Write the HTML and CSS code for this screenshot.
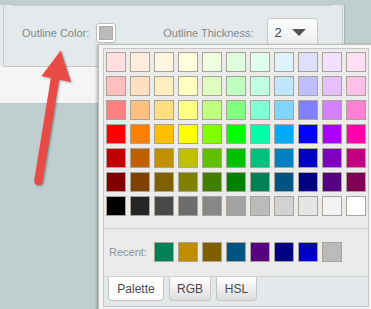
FILE: index.html
```html
<!DOCTYPE html>
<html>
	<head>
		<title>Outline Color Picker</title>
		<link rel="stylesheet" href="styles.css">
	</head>
	<body>
		<div class="window">
			<div class="panel">
				<div class="rule"></div>
				<div class="row">
					<span class="label">Outline Color:</span>
					<span class="color-btn"><span class="color-chip"></span></span>
					<span class="label thick-label">Outline Thickness:</span>
					<span class="select">2<span class="caret"></span></span>
				</div>
			</div>
		</div>

		<svg class="arrow" width="100" height="200" viewBox="0 0 100 200">
			<g class="arrow-shape">
				<line x1="38.5" y1="181" x2="55.5" y2="76" stroke="#e84b46" stroke-width="8.5" stroke-linecap="round"/>
				<polygon points="60.7,50.5 41.5,76 71,82" fill="#e84b46"/>
			</g>
		</svg>

		<div class="picker">
			<div class="picker-body">
				<div class="grid" id="grid"></div>
				<div class="recent">
					<span class="recent-label">Recent:</span>
					<div class="recent-list" id="recent"></div>
				</div>
				<div class="tabs">
					<span class="tab tab-palette active">Palette</span>
					<span class="tab tab-rgb">RGB</span>
					<span class="tab tab-hsl">HSL</span>
				</div>
			</div>
		</div>

		<script>
			let palette = [
				"#ffdfdf", "#ffeedf", "#fff6df", "#ffffdf", "#efffdf", "#dfffdf", "#dffff0", "#dff3ff", "#dfdfff", "#f3dfff", "#ffdff3",
				"#ffbfbf", "#ffdfbf", "#ffefbf", "#ffffbf", "#dfffbf", "#bfffbf", "#bfffe6", "#bfe6ff", "#bfbfff", "#e6bfff", "#ffbfe6",
				"#ff8080", "#ffbf80", "#ffdf80", "#ffff80", "#bfff80", "#80ff80", "#80ffd5", "#80d5ff", "#8080ff", "#d580ff", "#ff80d5",
				"#ff0000", "#ff8000", "#ffbf00", "#ffff00", "#80ff00", "#00ff00", "#00ffaa", "#00aaff", "#0000ff", "#aa00ff", "#ff00aa",
				"#c00000", "#c06000", "#c09000", "#c0c000", "#60c000", "#00c000", "#00c080", "#0080c0", "#0000c0", "#8000c0", "#c00080",
				"#800000", "#804000", "#806000", "#808000", "#408000", "#008000", "#008055", "#005580", "#000080", "#550080", "#800055",
				"#000000", "#252525", "#494949", "#6d6d6d", "#888888", "#a4a4a4", "#bbbbbb", "#d2d2d2", "#e5e5e5", "#f2f2f2", "#ffffff"
			];
			let recent = ["#008055", "#c08c00", "#7f5f00", "#005580", "#55007f", "#000080", "#0000c0", "#bbbbbb"];

			function fill(id, colors) {
				let box = document.getElementById(id);
				for (let c of colors) {
					let s = document.createElement("span");
					s.className = "swatch";
					s.style.background = c;
					box.appendChild(s);
				}
			}

			fill("grid", palette);
			fill("recent", recent);
		</script>
	</body>
</html>
```

FILE: styles.css
```css
body {
	margin: 0;
	width: 371px;
	height: 309px;
	overflow: hidden;
	position: relative;
	background: #bfcece;
	font-family: "Liberation Sans", Arial, sans-serif;
}

.window {
	width: 344px;
	height: 98px;
	background: linear-gradient(#e6ebed 0, #e6ebed 62px, #f5f5f5 62px);
	box-shadow: 1px 0 1px rgba(0, 0, 0, 0.12);
}

.panel {
	box-sizing: border-box;
	margin-left: 3px;
	width: 340px;
	height: 62px;
	background: #e4eaec;
	border: 1px solid #c5cbcd;
	border-top: none;
}

.rule {
	margin: 5px 11px 0 8px;
	height: 1px;
	background: #ccd2d4;
}

.row {
	display: flex;
	align-items: center;
	margin-top: 12px;
	height: 30px;
	padding-left: 18px;
}

.label {
	font-size: 11px;
	color: #7e888b;
}

.color-btn {
	box-sizing: border-box;
	width: 20px;
	height: 20px;
	margin-left: 7px;
	padding: 2px;
	background: #fff;
	border: 1px solid #bcc1c3;
	border-radius: 3px;
}

.color-chip {
	display: block;
	width: 14px;
	height: 14px;
	box-sizing: border-box;
	background: #bbbbbb;
	border: 1px solid #ababab;
}

.thick-label {
	margin-left: 47px;
}

.select {
	box-sizing: border-box;
	display: flex;
	align-items: center;
	width: 51px;
	height: 30px;
	margin-left: 13px;
	padding: 0 11px 2px 7px;
	font-size: 13px;
	color: #444;
	background: linear-gradient(#ffffff, #e9eced);
	border: 1px solid #c3c8ca;
	border-radius: 4px;
}

.caret {
	margin-left: auto;
	width: 0;
	height: 0;
	border-left: 7px solid transparent;
	border-right: 7px solid transparent;
	border-top: 7px solid #555;
}

.arrow {
	position: absolute;
	left: 0;
	top: 0;
}

.arrow-shape {
	filter: drop-shadow(1px 1px 1.2px rgba(0, 0, 0, 0.35));
}

.picker {
	position: absolute;
	left: 98px;
	top: 44px;
	width: 280px;
	height: 270px;
	box-sizing: border-box;
	padding: 3px 0 0 4px;
	background: #f4f4f4;
	border: 1px solid #bdbdbd;
	box-shadow: -1px 1px 3px rgba(0, 0, 0, 0.3);
}

.picker-body {
	box-sizing: border-box;
	width: 266px;
	height: 259px;
	background: #ebebeb;
	border: 1px solid #c6c6c6;
	padding: 3px 2px 0 2px;
}

.grid {
	display: grid;
	grid-template-columns: repeat(11, 20px);
	grid-auto-rows: 20px;
	gap: 4px;
	padding-bottom: 12px;
	border-bottom: 1px solid #cdd1d2;
	margin: 0 -2px;
	padding-left: 2px;
}

.swatch {
	box-sizing: border-box;
	display: block;
	width: 20px;
	height: 20px;
	border: 1px solid #a9a496;
}

.recent {
	display: flex;
	align-items: center;
	padding: 13px 0 14px 3px;
}

.recent-label {
	width: 45px;
	font-size: 11px;
	color: #8a9497;
}

.recent-list {
	display: flex;
	gap: 4px;
}

.tabs {
	display: flex;
	gap: 5px;
	margin: 0 -2px;
	padding-left: 4px;
	height: 29px;
	background: #e3e9eb;
	border-top: 1px solid #cdd1d2;
}

.tab {
	box-sizing: border-box;
	display: flex;
	align-items: center;
	justify-content: center;
	height: 24px;
	font-size: 12px;
	color: #4a4a4a;
	background: linear-gradient(#ffffff, #dedede);
	border: 1px solid #c4c4c4;
	border-top: none;
	border-radius: 0 0 4px 4px;
}

.tab-palette {
	width: 56px;
}

.tab-rgb {
	width: 42px;
}

.tab-hsl {
	width: 41px;
}

.tab.active {
	background: #fff;
}
```
